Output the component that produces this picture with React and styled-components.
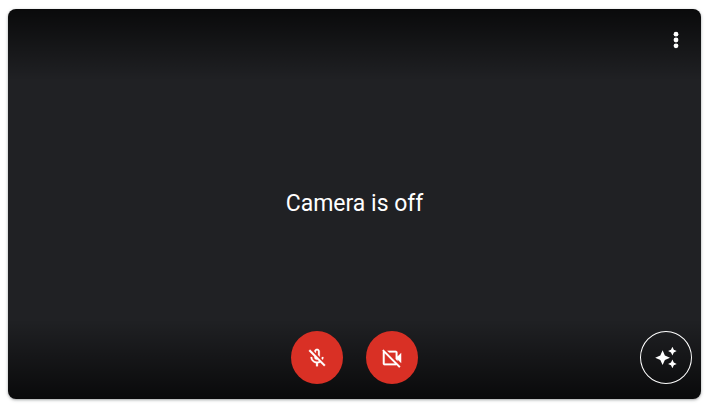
import React from "react";
import styled, { createGlobalStyle } from "styled-components";

const GlobalStyle = createGlobalStyle`
  body {
    margin: 0;
    background: #fff;
    font-family: Roboto, "Liberation Sans", sans-serif;
  }
`;

const Page = styled.main`
  box-sizing: border-box;
  display: flex;
  min-height: 100vh;
  padding: 9px 6px 8px 8px;
`;

const Tile = styled.section`
  flex: 1;
  display: grid;
  grid-template-rows: 68px 1fr 68px;
  border-radius: 8px;
  overflow: hidden;
  color: #fff;
  background:
    linear-gradient(to bottom, rgba(0, 0, 0, 0.7), rgba(0, 0, 0, 0)) top / 100% 72px no-repeat,
    linear-gradient(to top, rgba(0, 0, 0, 0.7), rgba(0, 0, 0, 0)) bottom / 100% 80px no-repeat,
    #202124;
  box-shadow: 0 1px 2px rgba(60, 64, 67, 0.3), 0 1px 3px 1px rgba(60, 64, 67, 0.15);
`;

const TopBar = styled.header`
  display: flex;
  justify-content: flex-end;
  align-items: flex-start;
  padding: 7px 1px;
`;

const Message = styled.p`
  display: flex;
  align-items: center;
  justify-content: center;
  margin: 0;
  font-size: 23px;
  line-height: 32px;
`;

const Controls = styled.footer`
  display: grid;
  grid-template-columns: 1fr auto 1fr;
  align-items: start;
  padding: 0 9px;
`;

const Toggles = styled.div`
  grid-column: 2;
  display: flex;
  gap: 23px;
`;

const IconButton = styled.button`
  display: flex;
  align-items: center;
  justify-content: center;
  width: 48px;
  height: 48px;
  padding: 0;
  border: 0;
  border-radius: 50%;
  background: transparent;
  color: inherit;
  cursor: pointer;
`;

const RoundButton = styled(IconButton)`
  box-sizing: border-box;
  width: 52px;
  height: 53px;
  background: ${(p) => (p.$off ? "#d93025" : "transparent")};
  border: ${(p) => (p.$off ? "0" : "1px solid #fff")};
`;

const EffectsButton = styled(RoundButton)`
  justify-self: end;
`;

const Glyph = styled.svg`
  display: block;
  width: ${(p) => p.$size}px;
  height: ${(p) => p.$size}px;
  fill: currentColor;
`;

function Icon({ size = 24, children }) {
  return (
    <Glyph $size={size} viewBox="0 0 24 24" aria-hidden="true">
      {children}
    </Glyph>
  );
}

const MIC_OFF =
  "M10.8 4.9c0-.66.54-1.2 1.2-1.2s1.2.54 1.2 1.2l-.01 3.91L15 10.6V5c0-1.66-1.34-3-3-3-1.54 0-2.79 1.16-2.96 2.65l1.76 1.76V4.9zM19 11h-1.7c0 .58-.1 1.13-.27 1.64l1.27 1.27c.44-.88.7-1.87.7-2.91zM4.41 2.86L3 4.27l6 6V11c0 1.66 1.34 3 3 3 .23 0 .44-.03.65-.08l1.66 1.66c-.71.33-1.5.52-2.31.52-2.76 0-5.3-2.1-5.3-5.1H5c0 3.41 2.72 6.23 6 6.72V21h2v-3.28c.91-.13 1.77-.45 2.55-.9l4.2 4.2 1.41-1.41L4.41 2.86z";
const CAMERA_OFF =
  "M18 10.48V6c0-1.1-.9-2-2-2H6.83l2 2H16v7.17l2 2v-1.65l4 3.98v-11l-4 3.98zM16 16L6 6 4 4 2.81 2.81 1.39 4.22l.85.85C2.09 5.35 2 5.66 2 6v12c0 1.1.9 2 2 2h12c.34 0 .65-.09.93-.24l2.85 2.85 1.41-1.41L18 18l-2-2zM4 18V6.83L15.17 18H4z";
const SPARKLES =
  "M8.6 4.3l2.3 5.1 5.1 2.3-5.1 2.3-2.3 5.1-2.3-5.1-5.1-2.3 5.1-2.3zM18.4.8l1.4 2.9 2.9 1.4-2.9 1.4-1.4 2.9-1.4-2.9-2.9-1.4 2.9-1.4zM18.4 13.6l1.4 2.9 2.9 1.4-2.9 1.4-1.4 2.9-1.4-2.9-2.9-1.4 2.9-1.4z";

export default function App() {
  return (
    <>
      <GlobalStyle />
      <Page>
        <Tile aria-label="Camera preview">
          <TopBar>
            <IconButton type="button" aria-label="More options">
              <Icon>
                <circle cx="12" cy="6.2" r="2.4" />
                <circle cx="12" cy="12" r="2.4" />
                <circle cx="12" cy="17.8" r="2.4" />
              </Icon>
            </IconButton>
          </TopBar>
          <Message>Camera is off</Message>
          <Controls>
            <Toggles>
              <RoundButton type="button" $off aria-label="Turn on microphone">
                <Icon size={22}>
                  <path d={MIC_OFF} stroke="currentColor" strokeWidth="0.3" />
                </Icon>
              </RoundButton>
              <RoundButton type="button" $off aria-label="Turn on camera">
                <Icon size={22}>
                  <path d={CAMERA_OFF} stroke="currentColor" strokeWidth="0.2" />
                </Icon>
              </RoundButton>
            </Toggles>
            <EffectsButton type="button" aria-label="Apply visual effects">
              <Icon>
                <path d={SPARKLES} />
              </Icon>
            </EffectsButton>
          </Controls>
        </Tile>
      </Page>
    </>
  );
}
